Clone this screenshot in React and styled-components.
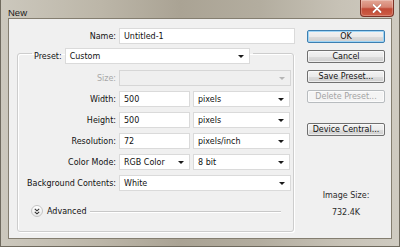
import React from 'react';
import styled, { createGlobalStyle } from 'styled-components';

const GlobalStyle = createGlobalStyle`
    html, body {
        margin: 0;
        padding: 0;
        background: #ffffff;
    }
    * {
        box-sizing: border-box;
    }
`;

// outer window frame (Windows 7 basic look)
const Window = styled.div`
    width: 400px;
    height: 247px;
    display: flex;
    flex-direction: column;
    padding: 0 7px 7px 7px;
    border: 1px solid #6f6a5e;
    border-top: none;
    background: linear-gradient(90deg, #ccc8bd 0%, #bcb6a8 25%, #aaa394 45%, #b3ad9f 65%, #c7c2b6 85%, #cfcbc1 100%);
    font-family: "DejaVu Sans", "Liberation Sans", sans-serif;
    font-size: 8px;
    color: #111111;
`;

const TitleBar = styled.div`
    height: 20px;
    display: flex;
    align-items: flex-start;
    justify-content: space-between;
`;

const Title = styled.span`
    padding-top: 7px;
    font-family: "Liberation Sans", sans-serif;
    font-size: 9.5px;
    color: #1a1a1a;
`;

const CloseButton = styled.div`
    width: 34px;
    height: 17px;
    margin-right: -2px;
    display: flex;
    align-items: center;
    justify-content: center;
    border: 1px solid #7c3226;
    border-top: none;
    border-radius: 0 0 4px 4px;
    background: linear-gradient(180deg, #e3a696 0%, #d68472 45%, #c24a36 55%, #cd5e46 100%);
    box-shadow: inset 0 0 0 1px rgba(255, 255, 255, 0.25);
`;

const Client = styled.div`
    flex: 1;
    display: flex;
    border: 1px solid #847e70;
    background: #f0f0f0;
`;

const FormColumn = styled.div`
    width: 290px;
    display: flex;
    flex-direction: column;
    padding: 9px 0 0 8px;
`;

const Row = styled.div`
    height: 16px;
    display: flex;
    align-items: center;
    gap: ${props => props.gap || 3}px;
`;

const Label = styled.span`
    width: ${props => props.w || 98}px;
    text-align: right;
    white-space: nowrap;
    color: ${props => (props.disabled ? '#a8a8a8' : '#111111')};
`;

const TextField = styled.div`
    width: ${props => props.w}px;
    height: 16px;
    display: flex;
    align-items: center;
    padding-left: 4px;
    background: #ffffff;
    border: 1px solid #dadada;
    color: #111;
`;

const Select = styled.div`
    width: ${props => props.w}px;
    height: 16px;
    display: flex;
    align-items: center;
    justify-content: space-between;
    padding: 0 5px 0 4px;
    background: ${props => (props.disabled ? '#efefef' : '#ffffff')};
    border: 1px solid ${props => (props.disabled ? '#d6d6d6' : '#dadada')};
    color: #111;
`;

const Arrow = styled.i`
    width: 0;
    height: 0;
    border-left: 3px solid transparent;
    border-right: 3px solid transparent;
    border-top: 3px solid ${props => (props.disabled ? '#b5b5b5' : '#1a1a1a')};
`;

const Group = styled.fieldset`
    margin: -1px 0 6px 0;
    padding: 6px 2px 14px 0;
    width: 277px;
    flex: 1;
    border: 1px solid #cdcdcd;
    border-radius: 3px;
    box-shadow: inset 1px 1px 0 #ffffff, 1px 1px 0 #ffffff;
    display: flex;
    flex-direction: column;
    gap: 5px;
`;

const Legend = styled.legend`
    margin-left: 14px;
    padding: 5px 3px 0 2px;
    display: flex;
    align-items: center;
    gap: 3px;
`;

const AdvancedRow = styled.div`
    display: flex;
    align-items: center;
    margin-top: 9px;
    padding-left: 13px;
    padding-right: 10px;
    height: 12px;
`;

const Expander = styled.div`
    width: 12px;
    height: 12px;
    border-radius: 50%;
    border: 1px solid #c4c4c4;
    background: linear-gradient(180deg, #ffffff, #e9e9e9);
    display: flex;
    align-items: center;
    justify-content: center;
`;

const AdvancedText = styled.span`
    margin-left: 4px;
    margin-right: 3px;
`;

const Rule = styled.div`
    flex: 1;
    height: 1px;
    background: #c8c8c8;
    box-shadow: 0 1px 0 #ffffff;
`;

const SideColumn = styled.div`
    width: 78px;
    margin-left: 8px;
    display: flex;
    flex-direction: column;
    align-items: center;
    padding-top: 11px;
`;

const Button = styled.div`
    width: 78px;
    height: 13px;
    margin-top: ${props => props.mt || 0}px;
    display: flex;
    align-items: center;
    justify-content: center;
    border-radius: 2px;
    border: 1px solid ${props => (props.primary ? '#3c7fb1' : props.disabled ? '#b8bcbf' : '#707070')};
    background: ${props => (props.disabled ? '#f4f4f4' : 'linear-gradient(180deg, #f2f2f2 0%, #ebebeb 50%, #dddddd 51%, #cfcfcf 100%)')};
    box-shadow: ${props => (props.primary ? 'inset 0 0 0 1px #9fd5f6' : 'inset 0 0 0 1px rgba(255,255,255,0.6)')};
    color: ${props => (props.disabled ? '#a3a3a3' : '#111111')};
    white-space: nowrap;
`;

const InfoText = styled.div`
    margin-top: ${props => props.mt || 0}px;
    line-height: 11px;
    color: #2b2b2b;
`;

function ChevronsDown() {
    return (
        <svg width="6" height="7" viewBox="0 0 6 7">
            <path d="M0.8 0.8 L3 2.8 L5.2 0.8 M0.8 3.8 L3 5.8 L5.2 3.8" fill="none" stroke="#333" strokeWidth="1.1" />
        </svg>
    );
}

function CloseX() {
    return (
        <svg width="10" height="9" viewBox="0 0 10 9">
            <path d="M1.5 1 L8.5 8 M8.5 1 L1.5 8" stroke="#5a1a10" strokeWidth="2.6" strokeLinecap="round" opacity="0.35" />
            <path d="M1.5 1 L8.5 8 M8.5 1 L1.5 8" stroke="#ffffff" strokeWidth="1.8" strokeLinecap="round" />
        </svg>
    );
}

function Dropdown({ w, value, disabled }) {
    return (
        <Select w={w} disabled={disabled}>
            <span>{value}</span>
            <Arrow disabled={disabled} />
        </Select>
    );
}

const rows = [
    { label: 'Width:', value: '500', unit: 'pixels' },
    { label: 'Height:', value: '500', unit: 'pixels' },
    { label: 'Resolution:', value: '72', unit: 'pixels/inch' },
];

export default function App() {
    return (
        <>
            <GlobalStyle />
            <Window>
                <TitleBar>
                    <Title>New</Title>
                    <CloseButton>
                        <CloseX />
                    </CloseButton>
                </TitleBar>
                <Client>
                    <FormColumn>
                        <Row>
                            <Label w={99}>Name:</Label>
                            <TextField w={176}>Untitled-1</TextField>
                        </Row>
                        <Group>
                            <Legend>
                                <span>Preset:</span>
                                <Dropdown w={185} value="Custom" />
                            </Legend>
                            <Row>
                                <Label disabled>Size:</Label>
                                <Dropdown w={172} value="" disabled />
                            </Row>
                            {rows.map(r => (
                                <Row key={r.label}>
                                    <Label>{r.label}</Label>
                                    <TextField w={71}>{r.value}</TextField>
                                    <Dropdown w={97} value={r.unit} />
                                </Row>
                            ))}
                            <Row>
                                <Label>Color Mode:</Label>
                                <Dropdown w={71} value="RGB Color" />
                                <Dropdown w={97} value="8 bit" />
                            </Row>
                            <Row>
                                <Label>Background Contents:</Label>
                                <Dropdown w={172} value="White" />
                            </Row>
                            <AdvancedRow>
                                <Expander>
                                    <ChevronsDown />
                                </Expander>
                                <AdvancedText>Advanced</AdvancedText>
                                <Rule />
                            </AdvancedRow>
                        </Group>
                    </FormColumn>
                    <SideColumn>
                        <Button primary>OK</Button>
                        <Button mt={7}>Cancel</Button>
                        <Button mt={7}>Save Preset...</Button>
                        <Button mt={7} disabled>Delete Preset...</Button>
                        <Button mt={20}>Device Central...</Button>
                        <InfoText mt={54}>Image Size:</InfoText>
                        <InfoText mt={6}>732.4K</InfoText>
                    </SideColumn>
                </Client>
            </Window>
        </>
    );
}
